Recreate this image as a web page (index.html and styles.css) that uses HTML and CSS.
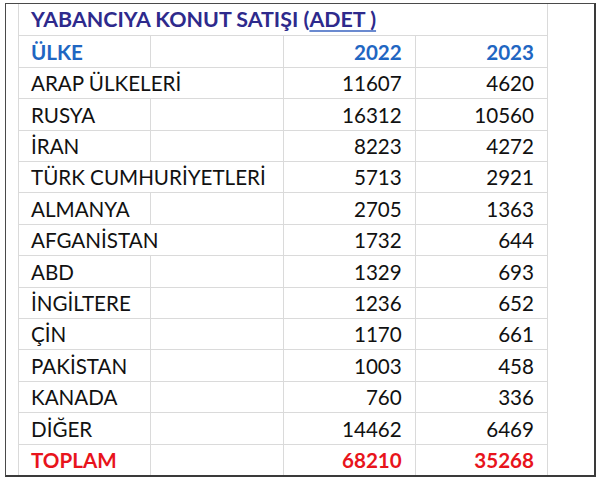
FILE: index.html
```html
<!DOCTYPE html>
<html lang="tr">
<head>
<meta charset="utf-8">
<link rel="stylesheet" href="styles.css">
</head>
<body>
<div class="frame">
  <table class="sheet">
    <tr class="title-row"><td colspan="4" class="title">YABANCIYA KONUT SATIŞI (<span class="link">ADET )</span></td></tr>
    <tr class="head"><td>ÜLKE</td><td></td><td class="num">2022</td><td class="num">2023</td></tr>
    <tr><td colspan="2">ARAP ÜLKELERİ</td><td class="num">11607</td><td class="num">4620</td></tr>
    <tr><td>RUSYA</td><td></td><td class="num">16312</td><td class="num">10560</td></tr>
    <tr><td>İRAN</td><td></td><td class="num">8223</td><td class="num">4272</td></tr>
    <tr><td colspan="2">TÜRK CUMHURİYETLERİ</td><td class="num">5713</td><td class="num">2921</td></tr>
    <tr><td>ALMANYA</td><td></td><td class="num">2705</td><td class="num">1363</td></tr>
    <tr><td colspan="2">AFGANİSTAN</td><td class="num">1732</td><td class="num">644</td></tr>
    <tr><td>ABD</td><td></td><td class="num">1329</td><td class="num">693</td></tr>
    <tr><td>İNGİLTERE</td><td></td><td class="num">1236</td><td class="num">652</td></tr>
    <tr><td>ÇİN</td><td></td><td class="num">1170</td><td class="num">661</td></tr>
    <tr><td>PAKİSTAN</td><td></td><td class="num">1003</td><td class="num">458</td></tr>
    <tr><td>KANADA</td><td></td><td class="num">760</td><td class="num">336</td></tr>
    <tr><td>DİĞER</td><td></td><td class="num">14462</td><td class="num">6469</td></tr>
    <tr class="total"><td>TOPLAM</td><td></td><td class="num">68210</td><td class="num">35268</td></tr>
  </table>
</div>
</body>
</html>
```
FILE: styles.css
```css
html, body {
  margin: 0;
  padding: 0;
  background: #ffffff;
}
body {
  font-family: Lato, "Liberation Sans", sans-serif;
  color: #111111;
}
.frame {
  margin: 3px 0 0 5px;
  width: 576px;
  height: 471px;
  border-left: 1px solid #4a4a4a;
  border-top: 1px solid #4a4a4a;
  border-right: 2px solid #3a3a3a;
  border-bottom: 2px solid #3a3a3a;
  padding-left: 12px;
  box-sizing: content-box;
}
.sheet {
  border-collapse: collapse;
  table-layout: fixed;
  width: 530px;
  height: 471px;
}
.sheet td {
  width: 132px;
  border: 1px solid #dadada;
  padding: 1px 13px 0 12px;
  font-size: 20.6px;
  white-space: nowrap;
  overflow: visible;
  line-height: 1;
  vertical-align: middle;
}
.sheet tr:first-child td {
  border-top: none;
}
.sheet tr:last-child td {
  border-bottom: none;
}
.num {
  text-align: right;
}
.sheet .title {
  color: #2e2a8c;
  font-weight: 700;
  font-size: 21.4px;
}
.link {
  text-decoration: underline;
  text-decoration-color: #6a8ad0;
  text-underline-offset: 3px;
}
.head td {
  color: #1f66c2;
  font-weight: 700;
}
.total td {
  color: #e8141c;
  font-weight: 700;
}
```
